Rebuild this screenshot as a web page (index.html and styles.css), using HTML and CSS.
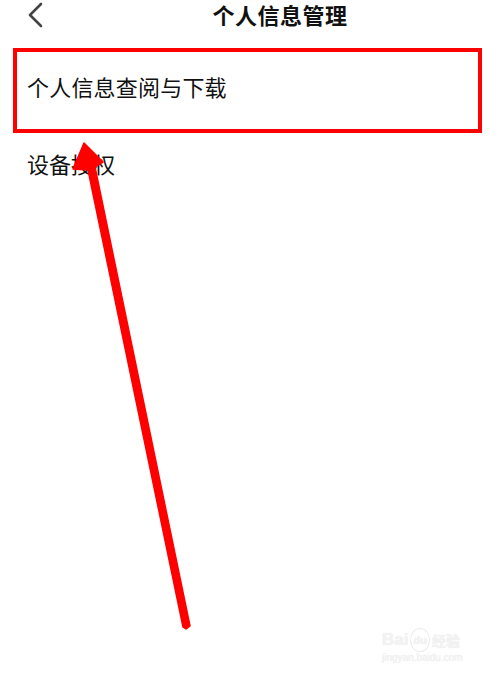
FILE: index.html
```html
<!DOCTYPE html>
<html lang="zh">
<head>
<meta charset="utf-8">
<link rel="stylesheet" href="styles.css">
</head>
<body>
<div class="page">
  <header class="nav">
    <svg class="back" width="20" height="26" viewBox="0 0 20 26"><path d="M15 2 L4 13 L15 24" fill="none" stroke="#444" stroke-width="2.6" stroke-linecap="round" stroke-linejoin="round"/></svg>
    <h1 class="title">个人信息管理</h1>
  </header>
  <ul class="list">
    <li class="item highlight">个人信息查阅与下载</li>
    <li class="item second">设备授权</li>
  </ul>
  <svg class="arrow" width="500" height="675" viewBox="0 0 500 675">
    <polygon points="84,143 103,162 95,167 190,626 186,629 183,627 88,170 73,169" fill="#ff0000" stroke="#ff0000" stroke-width="1.5" stroke-linejoin="round"/>
  </svg>
  <div class="watermark">
    <div class="wm-top"><span class="wm-bai">Bai</span><span class="wm-du">du</span><span class="wm-jy">经验</span></div>
    <div class="wm-url">jingyan.baidu.com</div>
  </div>
</div>
</body>
</html>
```
FILE: styles.css
```css
* { box-sizing: border-box; }
html, body { margin: 0; padding: 0; background: #fff; }
body {
  font-family: "Noto Sans CJK SC", "Noto Sans", sans-serif;
  color: #111;
}
.page { position: relative; width: 500px; height: 675px; overflow: hidden; }
.nav {
  position: relative;
  height: 30px;
  display: flex;
  align-items: flex-start;
  justify-content: center;
  padding-top: 2px;
}
.back { position: absolute; left: 26px; top: 2px; }
.title {
  margin: 0;
  font-size: 22px;
  font-weight: 700;
  line-height: 24px;
  padding-left: 60px;
  letter-spacing: 0.5px;
}
.list { list-style: none; margin: 18px 0 0; padding: 0; }
.item {
  font-size: 22px;
  line-height: 28px;
  padding-left: 27px;
}
.highlight {
  margin: 0 18px 0 13px;
  height: 85px;
  border: 4px solid #ff0000;
  padding: 20px 0 0 10px;
  letter-spacing: 0.2px;
}
.second { padding-top: 16px; }
.arrow { position: absolute; left: 0; top: 0; }
.watermark {
  position: absolute;
  left: 382px;
  top: 628px;
  color: #f3f3f3;
  font-family: "Liberation Sans", sans-serif;
  text-shadow: 0 0 1px #e2e2e2;
}
.wm-top { display: flex; align-items: center; gap: 2px; font-size: 17px; font-weight: 700; line-height: 22px; }
.wm-du { font-size: 11px; border: 1px solid #ececec; border-radius: 50%; padding: 0 2px; }
.wm-jy { font-family: "Noto Sans CJK SC", sans-serif; font-size: 14px; }
.wm-url { font-size: 10px; line-height: 12px; }
```
